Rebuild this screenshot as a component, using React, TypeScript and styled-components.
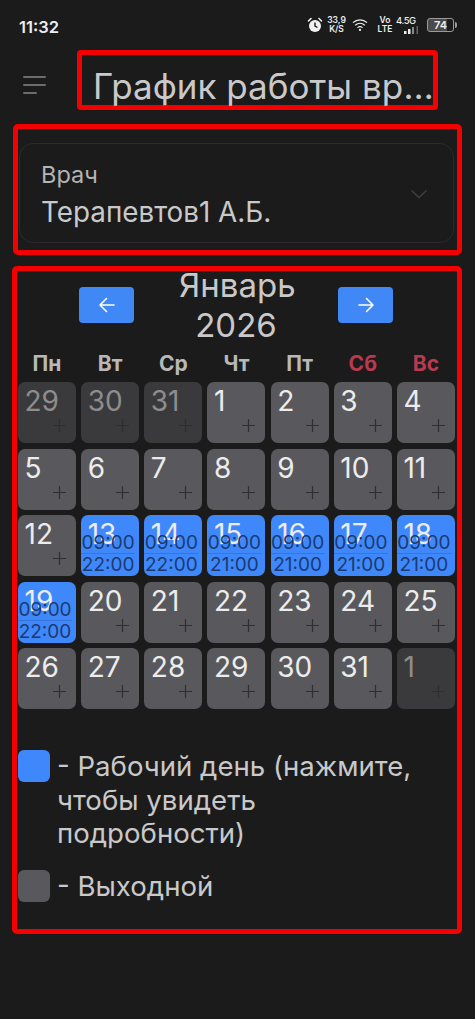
import React from 'react'
import styled, { createGlobalStyle } from 'styled-components'

const GlobalStyle = createGlobalStyle`
  html, body {
    margin: 0;
    padding: 0;
    background: #1b1b1c;
  }
  * {
    box-sizing: border-box;
  }
`

type Day = { n: number; muted?: boolean; from?: string; to?: string }

const weekdays = ['Пн', 'Вт', 'Ср', 'Чт', 'Пт', 'Сб', 'Вс']

const days: Day[] = [
  { n: 29, muted: true },
  { n: 30, muted: true },
  { n: 31, muted: true },
  { n: 1 },
  { n: 2 },
  { n: 3 },
  { n: 4 },
  { n: 5 },
  { n: 6 },
  { n: 7 },
  { n: 8 },
  { n: 9 },
  { n: 10 },
  { n: 11 },
  { n: 12 },
  { n: 13, from: '09:00', to: '22:00' },
  { n: 14, from: '09:00', to: '22:00' },
  { n: 15, from: '09:00', to: '21:00' },
  { n: 16, from: '09:00', to: '21:00' },
  { n: 17, from: '09:00', to: '21:00' },
  { n: 18, from: '09:00', to: '21:00' },
  { n: 19, from: '09:00', to: '22:00' },
  { n: 20 },
  { n: 21 },
  { n: 22 },
  { n: 23 },
  { n: 24 },
  { n: 25 },
  { n: 26 },
  { n: 27 },
  { n: 28 },
  { n: 29 },
  { n: 30 },
  { n: 31 },
  { n: 1, muted: true },
]

function PlusIcon() {
  return (
    <svg width="13" height="13" viewBox="0 0 13 13" fill="none">
      <path d="M6.5 0v13M0 6.5h13" stroke="currentColor" strokeWidth="1.2" />
    </svg>
  )
}

function Arrow({ flip }: { flip?: boolean }) {
  return (
    <svg width="18" height="16" viewBox="0 0 18 16" fill="none" style={flip ? { transform: 'scaleX(-1)' } : undefined}>
      <path d="M16 8H2M8.5 1.5 2 8l6.5 6.5" stroke="#fff" strokeWidth="1.6" strokeLinecap="round" strokeLinejoin="round" />
    </svg>
  )
}

export default function App() {
  return (
    <Page>
      <GlobalStyle />
      <StatusBar>
        <Clock>11:32</Clock>
        <StatusIcons>
          <svg width="16" height="16" viewBox="0 0 16 16">
            <path d="M1.5 4 4 1.5M14.5 4 12 1.5" stroke="#eee" strokeWidth="1.6" strokeLinecap="round" />
            <circle cx="8" cy="9" r="6" fill="#f2f2f2" />
            <path d="M8 5.500V9l2.500 1.500" stroke="#1b1b1c" strokeWidth="1.400" fill="none" />
          </svg>
          <Speed>
            <b>33,9</b>
            <b>K/S</b>
          </Speed>
          <WifiIcon width="16" height="14" viewBox="0 0 17 14" fill="none">
            <path d="M1 4.500c4.400-4 10.600-4 15 0M3.400 7.200c3-2.600 7.200-2.600 10.200 0M5.800 9.800c1.600-1.300 3.800-1.300 5.400 0" stroke="#eee" strokeWidth="1.300" />
            <circle cx="8.500" cy="12.300" r="1.200" fill="#eee" />
          </WifiIcon>
          <Volte>
            <b>Vo</b>
            <b>LTE</b>
          </Volte>
          <Signal>
            <b>4.5G</b>
            <svg width="22" height="8" viewBox="0 0 22 8">
              <rect x="8" y="5" width="2.500" height="3" fill="#eee" />
              <rect x="12" y="3" width="2.500" height="5" fill="#eee" />
              <rect x="16" y="1" width="2" height="7" fill="#888" />
              <rect x="20.500" y="-6" width="1.500" height="14" fill="#666" />
            </svg>
          </Signal>
          <Battery>74</Battery>
        </StatusIcons>
      </StatusBar>

      <Header>
        <Burger>
          <BurgerLine $w={23} />
          <BurgerLine $w={23} />
          <BurgerLine $w={14} />
        </Burger>
        <TitleMark>
          <Title>График работы врача</Title>
        </TitleMark>
      </Header>

      <DoctorMark>
        <Select>
          <SelectText>
            <SelectLabel>Врач</SelectLabel>
            <SelectValue>Терапевтов1 А.Б.</SelectValue>
          </SelectText>
          <Chevron width="18" height="10" viewBox="0 0 18 10" fill="none">
            <path d="M1.500 1.500 9 8.500l7.500-7" stroke="#3f3f42" strokeWidth="1.600" />
          </Chevron>
        </Select>
      </DoctorMark>

      <CalendarMark>
        <MonthNav>
          <NavButton>
            <Arrow />
          </NavButton>
          <MonthName>Январь 2026</MonthName>
          <NavButton>
            <Arrow flip />
          </NavButton>
        </MonthNav>

        <Weekdays>
          {weekdays.map((w, i) => (
            <Weekday key={w} $weekend={i > 4}>
              {w}
            </Weekday>
          ))}
        </Weekdays>

        <Grid>
          {days.map((d, i) => (
            <Cell key={i} $work={!!d.from} $muted={d.muted}>
              <DayNumber $muted={d.muted}>{d.n}</DayNumber>
              {d.from ? (
                <Hours>
                  <HourLine $top>{d.from}</HourLine>
                  <HourLine>{d.to}</HourLine>
                </Hours>
              ) : (
                <PlusMark>
                  <PlusIcon />
                </PlusMark>
              )}
            </Cell>
          ))}
        </Grid>

        <Legend>
          <LegendRow>
            <Swatch $color="#3f88fb" />
            <LegendText>- Рабочий день (нажмите, чтобы увидеть подробности)</LegendText>
          </LegendRow>
          <LegendRow>
            <Swatch $color="#59595d" />
            <LegendText>- Выходной</LegendText>
          </LegendRow>
        </Legend>
      </CalendarMark>
    </Page>
  )
}

const Page = styled.div`
  width: 475px;
  height: 1019px;
  overflow: hidden;
  background: #1b1b1c;
  color: #d0d0d0;
  font-family: Inter, 'Liberation Sans', sans-serif;
`

const StatusBar = styled.div`
  display: flex;
  align-items: center;
  justify-content: space-between;
  height: 50px;
  padding: 3px 18px 0 19px;
`

const Clock = styled.span`
  font-size: 16.500px;
  font-weight: 600;
  color: #eeeeee;
`

const StatusIcons = styled.div`
  display: flex;
  align-items: center;
  gap: 5px;
  margin-top: -4px;
`

const Speed = styled.span`
  display: flex;
  flex-direction: column;
  align-items: center;
  width: 17px;
  font-size: 8.500px;
  line-height: 9px;
  color: #eeeeee;
  b {
    font-weight: 600;
  }
`

const WifiIcon = styled.svg`
  margin-left: 2px;
`

const Volte = styled(Speed)`
  width: 14px;
  margin-left: 5px;
`

const Signal = styled.span`
  display: flex;
  flex-direction: column;
  align-items: flex-start;
  width: 26px;
  margin-left: -1px;
  font-size: 9.500px;
  line-height: 10px;
  letter-spacing: -0.5px;
  color: #eeeeee;
  b {
    font-weight: 500;
  }
`

const Battery = styled.span`
  position: relative;
  width: 27px;
  height: 14px;
  margin-right: 3px;
  border: 1px solid #9a9a9a;
  border-radius: 3px;
  background: linear-gradient(90deg, #4a4a4a 74%, #1b1b1c 74%);
  color: #eeeeee;
  font-size: 11px;
  font-weight: 600;
  line-height: 12px;
  text-align: center;
  &::after {
    content: '';
    position: absolute;
    right: -4px;
    top: 3px;
    width: 2px;
    height: 6px;
    border-radius: 0 2px 2px 0;
    background: #9a9a9a;
  }
`

const Header = styled.div`
  display: flex;
  align-items: center;
  padding-left: 23px;
`

const Burger = styled.div`
  display: flex;
  flex-direction: column;
  gap: 6px;
  width: 54px;
  padding-top: 10px;
`

const BurgerLine = styled.span<{ $w: number }>`
  display: block;
  width: ${p => p.$w}px;
  height: 2px;
  background: #6c6c6e;
  border-radius: 1px;
`

const TitleMark = styled.div`
  width: 361px;
  height: 60px;
  border: 5px solid #f40000;
  border-radius: 4px;
  padding: 9px 0 0 11px;
`

const Title = styled.div`
  margin-right: -3px;
  font-size: 35px;
  line-height: 44px;
  color: #c9c9c9;
  white-space: nowrap;
  overflow: hidden;
  text-overflow: ellipsis;
`

const DoctorMark = styled.div`
  width: 449px;
  height: 131px;
  margin: 14px 0 0 13px;
  border: 5px solid #f40000;
  border-radius: 5px;
  padding: 14px 3px 0 1px;
`

const Select = styled.div`
  display: flex;
  align-items: center;
  justify-content: space-between;
  height: 100px;
  padding: 0 25px 0 21px;
  border: 1px solid #2b2b2d;
  border-radius: 14px;
`

const SelectText = styled.div`
  display: flex;
  flex-direction: column;
`

const SelectLabel = styled.span`
  font-size: 23.500px;
  line-height: 37px;
  color: #b4b4b4;
`

const SelectValue = styled.span`
  font-size: 27.800px;
  line-height: 38px;
  color: #c9c9c9;
`

const Chevron = styled.svg`
  margin-top: 1px;
`

const CalendarMark = styled.div`
  width: 450px;
  height: 668px;
  margin: 11px 0 0 12px;
  border: 5px solid #f40000;
  border-radius: 5px;
  padding: 0 1px;
`

const MonthNav = styled.div`
  display: flex;
  align-items: center;
  justify-content: center;
  gap: 45px;
  height: 76px;
  padding: 0 2px 8px 0;
`

const NavButton = styled.div`
  display: flex;
  align-items: center;
  justify-content: center;
  width: 55px;
  height: 36px;
  border-radius: 4px;
  background: #3f88f5;
`

const MonthName = styled.div`
  width: 114px;
  flex: none;
  font-size: 33px;
  line-height: 40px;
  text-align: center;
  color: #c9c9c9;
`

const Weekdays = styled.div`
  display: grid;
  grid-template-columns: repeat(7, 58px);
  column-gap: 5.170px;
  height: 32px;
  margin-bottom: 3px;
  align-items: center;
`

const Weekday = styled.div<{ $weekend: boolean }>`
  text-align: center;
  font-size: 21px;
  font-weight: 700;
  color: ${p => (p.$weekend ? '#b93a50' : '#b8b8b8')};
`

const Grid = styled.div`
  display: grid;
  grid-template-columns: repeat(7, 58px);
  grid-auto-rows: 61px;
  column-gap: 5.170px;
  row-gap: 5.500px;
`

const Cell = styled.div<{ $work: boolean; $muted?: boolean }>`
  position: relative;
  border-radius: 7px;
  padding: 2px 0 0 6.500px;
  background: ${p => (p.$work ? '#3f88fb' : p.$muted ? '#3a3a3c' : '#59595d')};
`

const DayNumber = styled.div<{ $muted?: boolean }>`
  font-size: 28px;
  line-height: 34px;
  color: ${p => (p.$muted ? '#8d8d8d' : '#ececec')};
`

const PlusMark = styled.span`
  position: absolute;
  right: 10px;
  bottom: 11px;
  display: flex;
  color: #2f2f31;
`

const Hours = styled.div`
  position: absolute;
  left: 0;
  right: 4px;
  bottom: 1px;
  text-align: center;
  font-size: 19px;
  line-height: 21px;
  color: #1c3a70;
`

const HourLine = styled.div<{ $top?: boolean }>`
  border-bottom: ${p => (p.$top ? '1px solid rgba(30, 60, 120, 0.25)' : 'none')};
`

const Legend = styled.div`
  display: flex;
  flex-direction: column;
  gap: 19.500px;
  margin-top: 41px;
`

const LegendRow = styled.div`
  display: flex;
  align-items: flex-start;
  gap: 7px;
`

const Swatch = styled.span<{ $color: string }>`
  flex: none;
  width: 32px;
  height: 32px;
  border-radius: 6px;
  background: ${p => p.$color};
`

const LegendText = styled.div`
  width: 380px;
  font-size: 27.600px;
  line-height: 33.500px;
  color: #c9c9c9;
`
